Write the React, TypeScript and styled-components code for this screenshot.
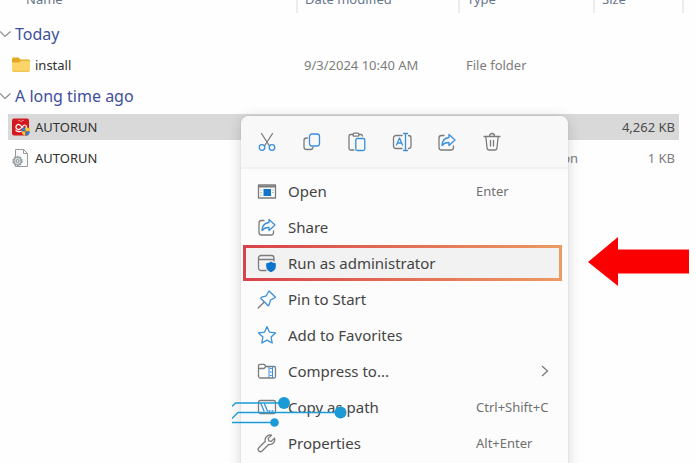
import React from "react";
import styled, { createGlobalStyle, css } from "styled-components";

const GlobalStyle = createGlobalStyle`
  * { box-sizing: border-box; }
  body {
    margin: 0;
    background: #fefefe;
    font-family: "Noto Sans", "Open Sans", sans-serif;
  }
`;

const Page = styled.main`
  position: relative;
  min-height: 100vh;
  overflow: hidden;
`;

const ListPane = styled.div`
  padding-right: 12px;
`;

const FileTable = styled.table`
  width: 100%;
  table-layout: fixed;
  border-collapse: separate;
  border-spacing: 0;
`;

const Column = styled.col<{ $width?: number }>`
  ${({ $width }) => $width && `width: ${$width}px;`}
`;

const HeaderCell = styled.th<{ $first?: boolean }>`
  height: 13px;
  padding: 0 0 0 ${({ $first }) => ($first ? 26 : 7)}px;
  border-right: 2px solid #ececec;
  text-align: left;
  font-weight: 400;
`;

const HeaderLabel = styled.span`
  display: flex;
  align-items: flex-end;
  height: 13px;
  overflow: hidden;
  padding-bottom: 4px;
  font-size: 13px;
  line-height: 20px;
  color: #66758b;
`;

const GroupCell = styled.th`
  height: 31px;
  padding: 5px 0 1px;
  text-align: left;
  font-weight: 400;
`;

const GroupToggle = styled.button`
  display: flex;
  align-items: center;
  gap: 3px;
  padding: 0;
  border: 0;
  background: none;
  font: inherit;
  font-size: 16px;
  line-height: 24px;
  color: #3f4f9b;
`;

const FileCell = styled.td<{ $align?: "right" }>`
  height: 26px;
  padding: 0 0 0 6px;
  background-clip: padding-box;
  font-size: 13px;
  line-height: 20px;
  white-space: nowrap;
  overflow: hidden;
  text-align: ${({ $align }) => $align || "left"};
  &:first-child {
    padding-left: 4px;
    border-left: 8px solid transparent;
  }
  &:last-child {
    padding-right: 4px;
    border-right: 5px solid transparent;
  }
`;

const FileRow = styled.tr<{ $selected?: boolean }>`
  color: #7c7c7c;
  ${({ $selected }) =>
    $selected &&
    css`
      color: #4c4c4c;
      ${FileCell} { background-color: #d9d9d9; }
    `}
`;

const FileName = styled.span`
  display: flex;
  align-items: center;
  gap: 5px;
  color: #303030;
`;

const SpacerCell = styled.td<{ $height: number }>`
  height: ${({ $height }) => $height}px;
  padding: 0;
`;

const Menu = styled.div`
  position: absolute;
  top: 116px;
  left: 241px;
  width: 327px;
  border-radius: 8px;
  background: #fcfcfc;
  box-shadow: 0 2px 14px rgba(0, 0, 0, 0.16), 0 0 1px rgba(0, 0, 0, 0.25);
`;

const Toolbar = styled.div`
  display: flex;
  gap: 17px;
  padding: 12px 12px 11px;
  border-bottom: 2px solid #f1f1f1;
  border-radius: 8px 8px 0 0;
  background: #f8f8f8;
`;

const ToolButton = styled.button`
  display: grid;
  place-items: center;
  width: 28px;
  height: 28px;
  padding: 0;
  border: 0;
  background: none;
`;

const MenuList = styled.div`
  display: flex;
  flex-direction: column;
  padding: 4px 6px 40px 2px;
`;

const MenuItem = styled.button<{ $highlighted?: boolean }>`
  display: grid;
  grid-template-columns: 20px 1fr 81px;
  column-gap: 11px;
  align-items: center;
  height: 36px;
  padding: 0 2px 0 11px;
  border: 3px solid transparent;
  background: none;
  font: inherit;
  font-size: 15px;
  line-height: 20px;
  text-align: left;
  color: #444;
  ${({ $highlighted }) =>
    $highlighted &&
    css`
      background:
        linear-gradient(#f2f2f2, #f2f2f2) padding-box,
        linear-gradient(90deg, #d9424a, #ec9a62) border-box;
    `}
`;

const Shortcut = styled.span`
  font-size: 13px;
  white-space: nowrap;
  color: #707070;
`;

const SubmenuMark = styled.span`
  display: flex;
  justify-content: flex-end;
  padding-right: 8px;
`;

const Circuit = styled.svg`
  position: absolute;
  top: 394px;
  left: 232px;
  pointer-events: none;
`;

const Pointer = styled.svg`
  position: absolute;
  top: 237px;
  left: 588px;
  pointer-events: none;
`;

const Glyph = styled.svg.attrs({ width: 20, height: 20, viewBox: "0 0 20 20" })`
  display: block;
  fill: none;
  stroke: #7c7c7c;
  stroke-width: 1.3;
  stroke-linecap: round;
  stroke-linejoin: round;
  .accent { stroke: #3a8fd8; }
  .paint { fill: #0f74cc; stroke: none; }
`;

const FileGlyph = styled.svg.attrs({ width: 18, height: 18, viewBox: "0 0 18 18" })`
  display: block;
  flex: none;
`;

const Chevron = () => (
  <svg width="12" height="12" viewBox="0 0 12 12" fill="none" stroke="#8c8c8c" strokeWidth="1.2">
    <path d="M0 3.5 5 8.5 10.500 3.500" />
  </svg>
);

const FolderIcon = () => (
  <FileGlyph>
    <path d="M0 3a1.500 1.500 0 0 1 1.500-1.500h5L8.500 3.500H16.500A1.500 1.500 0 0 1 18 5v5H0z" fill="#e5a823" />
    <path d="M0 6.500h7l2-1.700h7.500A1.500 1.500 0 0 1 18 6.300v8a1.500 1.500 0 0 1-1.500 1.500h-15A1.500 1.500 0 0 1 0 14.300z" fill="#fbd568" />
    <path d="M1 15.300h16" stroke="#edbd48" />
  </FileGlyph>
);

const AppIcon = () => (
  <FileGlyph>
    <rect width="17" height="17" y=".5" rx="2" fill="#d3191f" />
    <path d="M6.500 2.500c1-1 1.500 1 2.500 1s1.500-2 2.500-1" fill="none" stroke="#f4b3ad" />
    <path d="M8 11a2.500 2.500 0 1 1 0-4c1.500 1 3 4 4.500 4a2 2 0 0 0 0-4C11 7 10 10 8 11M3.500 12c2 2 4.500 2 6.500 1" fill="none" stroke="#fff" strokeWidth="1.200" />
    <path d="M9.500 10.500 13.500 9v4.500h-4z" fill="#3979c4" />
    <path d="M13.500 9 18 10.500v3h-4.500z" fill="#f5c735" />
    <path d="M9.500 13.500h4V18c-2-.7-4-2.500-4-4.500" fill="#f5c735" />
    <path d="M13.500 13.500H18c0 2-2 3.800-4.500 4.500" fill="#3979c4" />
  </FileGlyph>
);

const ConfigIcon = () => (
  <FileGlyph fill="none" stroke="#999">
    <path d="M3.500.5h8l4 4v13h-12z" fill="#fafafa" />
    <path d="M11.500.5v4h4" />
    <circle cx="5.500" cy="12" r="4.300" fill="#e4e7e8" stroke="#929b9f" strokeWidth="1.800" strokeDasharray="1.900 .8" />
    <circle cx="5.500" cy="12" r="3.600" fill="#dce0e2" stroke="#929b9f" />
    <circle cx="5.500" cy="12" r="1.400" fill="#fff" stroke="#7f898d" />
  </FileGlyph>
);

const CutIcon = () => (
  <Glyph>
    <path d="m4.500 1.500 7.700 12M15.500 1.500 7.800 13.500" />
    <circle className="accent" cx="5" cy="15.500" r="2.800" />
    <circle className="accent" cx="15" cy="15.500" r="2.800" />
  </Glyph>
);

const CopyIcon = () => (
  <Glyph>
    <path d="M5.500 6H4.500A2.500 2.500 0 0 0 2 8.500v6.500A2.500 2.500 0 0 0 4.500 17.500h4A2.500 2.500 0 0 0 11 15.500" />
    <rect className="accent" x="7.500" y="2" width="10" height="12" rx="2.500" />
  </Glyph>
);

const PasteIcon = () => (
  <Glyph>
    <path d="M6 2.500H3.500A1.500 1.500 0 0 0 2 4v12.500A1.500 1.500 0 0 0 3.500 18H7M12 2.500h2A1.500 1.500 0 0 1 15.500 4" />
    <rect x="6" y="1.200" width="6" height="3" rx="1.300" />
    <rect className="accent" x="8.800" y="6.500" width="9" height="12" rx="1.500" />
  </Glyph>
);

const RenameIcon = () => (
  <Glyph>
    <path d="M10 3.500H4A2.500 2.500 0 0 0 1.500 6v8A2.500 2.500 0 0 0 4 16.500h6M16.500 3.500A2.500 2.500 0 0 1 19 6v8a2.500 2.500 0 0 1-2.500 2.500" />
    <path className="accent" d="m4.500 13 3-7 3 7M5.500 11h4M11.500 1.500h4M13.500 1.500v17M11.500 18.500h4" />
  </Glyph>
);

const ShareIcon = () => (
  <Glyph>
    <path d="M7 3.500H4.500A2.500 2.500 0 0 0 2 6v9.500A2.500 2.500 0 0 0 4.500 18H14a2.500 2.500 0 0 0 2.500-2.500V14" />
    <path className="accent" d="M12 2.500 18 8l-6 5.500v-3c-3-.2-5 .5-7 3 .2-4.500 2.500-7.500 7-8z" />
  </Glyph>
);

const DeleteIcon = () => (
  <Glyph>
    <path d="M2 4.500h16M7.500 4a2.500 2.500 0 0 1 5 0M3.800 4.800l1.300 11.500A2 2 0 0 0 7 18h6a2 2 0 0 0 1.900-1.700l1.300-11.500M8.500 8.500v5.500M11.500 8.500v5.500" />
  </Glyph>
);

const OpenIcon = () => (
  <Glyph>
    <rect x="1.500" y="4" width="17" height="13" />
    <path d="M2 5.500h16" strokeWidth="1.800" />
    <path className="paint" d="M6.500 8h7.500v7H6.500z" />
    <path d="M4 9v0M4 11.500v0M4 14v0M16 9v0M16 11.500v0" strokeWidth="1.200" />
  </Glyph>
);

const AdminIcon = () => (
  <Glyph>
    <path d="M9 17.500H4A2.500 2.500 0 0 1 1.500 15V5A2.500 2.500 0 0 1 4 2.500h10.500A2.500 2.500 0 0 1 17 5v3M1.500 6.500H17" />
    <path className="paint" d="M14 8.500c1.500 1.200 3 1.700 4.800 1.700v3.300c0 3-2 4.700-4.800 5.800-2.800-1.100-4.800-2.800-4.800-5.800v-3.300c1.800 0 3.300-.5 4.800-1.700" />
  </Glyph>
);

const PinIcon = () => (
  <Glyph>
    <path className="accent" d="m12 2 6.500 6.300-1.700 1-3.300 1.700-1.300 4.700-1 1-7.500-7.500 1-1 4.600-1.400L11 3.500z" />
    <path d="m7.200 13-6 6" />
  </Glyph>
);

const StarIcon = () => (
  <Glyph>
    <path className="accent" d="m10 1.700 2.500 5.500 6 .7-4.400 4.100 1.100 6L10 15.100 4.800 18l1.100-6L1.500 7.900l6-.7z" />
  </Glyph>
);

const CompressIcon = () => (
  <Glyph>
    <path d="M1.500 5A1.700 1.700 0 0 1 3.200 3.300H7L9 5.500h8A1.500 1.500 0 0 1 18.500 7v8.500A1.500 1.500 0 0 1 17 17H3.200a1.700 1.700 0 0 1-1.700-1.500zM1.500 7.500H7l2-2" />
    <path className="accent" d="M12 6v10.500M15.500 6v10.500" strokeWidth="1" />
    <path className="accent" d="M13.800 7v9" strokeWidth="2" strokeDasharray="1 2.500" strokeLinecap="butt" />
  </Glyph>
);

const PathIcon = () => (
  <Glyph>
    <rect x="1.500" y="3.500" width="17" height="13" rx="2" />
    <path className="accent" d="m4 7 3 7M7.500 7l3 7M12 14h1M15 14h1" />
  </Glyph>
);

const WrenchIcon = () => (
  <Glyph>
    <path d="M17.500 5.200 14.300 8.400 11.800 7.800 11.200 5.400 14.500 2.200A5 5 0 0 0 8.300 8.300L1.900 14.800a2.200 2.200 0 0 0 3.200 3.200l6.500-6.500a5 5 0 0 0 5.900-6.300z" />
  </Glyph>
);

const tools = [
  { label: "Cut", Icon: CutIcon },
  { label: "Copy", Icon: CopyIcon },
  { label: "Paste", Icon: PasteIcon },
  { label: "Rename", Icon: RenameIcon },
  { label: "Share", Icon: ShareIcon },
  { label: "Delete", Icon: DeleteIcon },
];

type Action = {
  label: string;
  Icon: React.ComponentType;
  shortcut?: string;
  highlighted?: boolean;
  submenu?: boolean;
};

const actions: Action[] = [
  { label: "Open", Icon: OpenIcon, shortcut: "Enter" },
  { label: "Share", Icon: ShareIcon },
  { label: "Run as administrator", Icon: AdminIcon, highlighted: true },
  { label: "Pin to Start", Icon: PinIcon },
  { label: "Add to Favorites", Icon: StarIcon },
  { label: "Compress to...", Icon: CompressIcon, submenu: true },
  { label: "Copy as path", Icon: PathIcon, shortcut: "Ctrl+Shift+C" },
  { label: "Properties", Icon: WrenchIcon, shortcut: "Alt+Enter" },
];

type File = {
  name: string;
  Icon: React.ComponentType;
  date?: string;
  type?: string;
  size?: string;
  selected?: boolean;
};

const groups: { title: string; files: File[] }[] = [
  {
    title: "Today",
    files: [{ name: "install", Icon: FolderIcon, date: "9/3/2024 10:40 AM", type: "File folder" }],
  },
  {
    title: "A long time ago",
    files: [
      { name: "AUTORUN", Icon: AppIcon, type: "Application", size: "4,262 KB", selected: true },
      { name: "AUTORUN", Icon: ConfigIcon, type: "Setup Information", size: "1 KB" },
    ],
  },
];

const SpacerRow = ({ height }: { height: number }) => (
  <tr aria-hidden="true">
    <SpacerCell colSpan={4} $height={height} />
  </tr>
);

const FileGroup = ({ title, files }: { title: string; files: File[] }) => (
  <tbody>
    <tr>
      <GroupCell colSpan={4} scope="rowgroup">
        <GroupToggle type="button" aria-expanded="true">
          <Chevron />
          {title}
        </GroupToggle>
      </GroupCell>
    </tr>
    {files.map(({ name, Icon, date, type, size, selected }, index) => (
      <React.Fragment key={index}>
        <SpacerRow height={5} />
        <FileRow $selected={selected}>
          <FileCell>
            <FileName>
              <Icon />
              {name}
            </FileName>
          </FileCell>
          <FileCell>{date}</FileCell>
          <FileCell>{type}</FileCell>
          <FileCell $align="right">{size}</FileCell>
        </FileRow>
      </React.Fragment>
    ))}
  </tbody>
);

export default function App() {
  return (
    <Page>
      <GlobalStyle />
      <ListPane>
        <FileTable>
          <colgroup>
            <Column />
            <Column $width={162} />
            <Column $width={135} />
            <Column $width={89} />
          </colgroup>
          <thead>
            <tr>
              {["Name", "Date modified", "Type", "Size"].map((label, index) => (
                <HeaderCell key={label} $first={index === 0} scope="col">
                  <HeaderLabel>{label}</HeaderLabel>
                </HeaderCell>
              ))}
            </tr>
            <SpacerRow height={3} />
          </thead>
          {groups.map((group) => (
            <FileGroup key={group.title} {...group} />
          ))}
        </FileTable>
      </ListPane>

      <Menu role="menu" aria-label="File actions">
        <Toolbar>
          {tools.map(({ label, Icon }) => (
            <ToolButton key={label} type="button" aria-label={label}>
              <Icon />
            </ToolButton>
          ))}
        </Toolbar>
        <MenuList>
          {actions.map(({ label, Icon, shortcut, highlighted, submenu }) => (
            <MenuItem key={label} type="button" role="menuitem" $highlighted={highlighted}>
              <Icon />
              <span>{label}</span>
              {shortcut && <Shortcut>{shortcut}</Shortcut>}
              {submenu && (
                <SubmenuMark>
                  <svg width="8" height="12" viewBox="0 0 8 12" fill="none" stroke="#777" strokeWidth="1.200">
                    <path d="m1 1 5.500 5L1 11" />
                  </svg>
                </SubmenuMark>
              )}
            </MenuItem>
          ))}
        </MenuList>
      </Menu>

      <Circuit width="116" height="36" viewBox="0 0 116 36" fill="none" stroke="#1b9ad6" strokeWidth="1.300" aria-hidden="true">
        <path d="M0 12.500 3.500 9H52M0 24.500 6 18.500H108M0 28.500H42" />
        <g fill="#1b9ad6" stroke="none">
          <circle cx="52" cy="9" r="6" />
          <circle cx="108.500" cy="18.500" r="6" />
          <circle cx="42.500" cy="28.500" r="4.300" />
        </g>
      </Circuit>
      <Pointer width="101" height="49" viewBox="0 0 101 49" aria-hidden="true">
        <path d="M0 25 30 0v12.500h71v24H30V49z" fill="#fb0000" />
      </Pointer>
    </Page>
  );
}
